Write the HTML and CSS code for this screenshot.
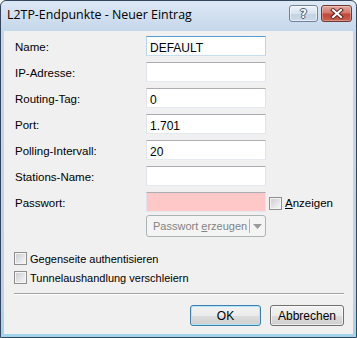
FILE: index.html
```html
<!doctype html>
<html lang="de">
  <head>
    <meta charset="UTF-8" />
    <title>L2TP-Endpunkte - Neuer Eintrag</title>
    <link rel="stylesheet" href="styles.css">
  </head>
  <body>
    <div class="window">
      <div class="titlebar">
        <span class="title">L2TP-Endpunkte - Neuer Eintrag</span>
        <div class="captionButtons">
          <div class="capBtn help"><span>?</span></div>
          <div class="capBtn close">
            <svg width="14" height="11" viewBox="0 0 14 11">
              <path d="M3 2 L11 9 M11 2 L3 9" stroke="#5a2a2a" stroke-width="4" stroke-linecap="square"/>
              <path d="M3 2 L11 9 M11 2 L3 9" stroke="#fff" stroke-width="2" stroke-linecap="square"/>
            </svg>
          </div>
        </div>
      </div>

      <div class="client">
        <div class="form">
          <label class="fieldLabel">Name:</label>
          <div class="textBox focused">DEFAULT</div>
          <span></span>

          <label class="fieldLabel">IP-Adresse:</label>
          <div class="textBox"></div>
          <span></span>

          <label class="fieldLabel">Routing-Tag:</label>
          <div class="textBox">0</div>
          <span></span>

          <label class="fieldLabel">Port:</label>
          <div class="textBox">1.701</div>
          <span></span>

          <label class="fieldLabel">Polling-Intervall:</label>
          <div class="textBox">20</div>
          <span></span>

          <label class="fieldLabel">Stations-Name:</label>
          <div class="textBox"></div>
          <span></span>

          <label class="fieldLabel">Passwort:</label>
          <div class="textBox invalid"></div>
          <div class="checkRow showPass">
            <span class="checkBox"></span>
            <span><u>A</u>nzeigen</span>
          </div>

          <span></span>
          <div class="splitButton">
            <span class="splitText">Passwort <u>e</u>rzeugen</span>
            <span class="splitArrow">
              <svg width="9" height="5" viewBox="0 0 9 5"><path d="M0 0 H9 L4.5 5 Z" fill="#9a9a9a"/></svg>
            </span>
          </div>
          <span></span>
        </div>

        <div class="options">
          <div class="checkRow">
            <span class="checkBox"></span>
            <span>Gegenseite authentisieren</span>
          </div>
          <div class="checkRow">
            <span class="checkBox"></span>
            <span>Tunnelaushandlung verschleiern</span>
          </div>
        </div>

        <div class="separator"></div>

        <div class="dialogButtons">
          <div class="pushButton default">OK</div>
          <div class="pushButton">Abbrechen</div>
        </div>
      </div>
    </div>
  </body>
</html>
```

FILE: styles.css
```css
* {
  box-sizing: border-box;
}

body {
  margin: 0;
  font-family: "Liberation Sans", Arial, sans-serif;
  font-size: 11px;
  color: #000;
  background: #fff;
}

.window {
  width: 357px;
  height: 338px;
  border: 1px solid #34465e;
  border-radius: 6px 6px 0 0;
  background: linear-gradient(#dde8f5, #c5d7eb 30px, #bdd2ea 300px, #9fd3ec);
  padding: 0 3px 3px;
  display: flex;
  flex-direction: column;
}

.titlebar {
  height: 30px;
  display: flex;
  align-items: flex-start;
}

.title {
  font-family: "Open Sans", "Noto Sans", sans-serif;
  font-size: 12.4px;
  margin: 5px 0 0 3px;
}

.captionButtons {
  margin-left: auto;
  margin-top: 4px;
  margin-right: 1px;
  display: flex;
  gap: 3px;
}

.capBtn {
  height: 17px;
  border-radius: 3px;
  display: flex;
  align-items: center;
  justify-content: center;
}

.help {
  width: 29px;
  border: 1px solid #71839c;
  background: linear-gradient(#eef3f9, #d7e2ef 50%, #c3d3e5 51%, #cbdaea);
  box-shadow: inset 0 0 0 1px rgba(255, 255, 255, 0.5);
}

.help span {
  font-family: "DejaVu Sans", sans-serif;
  font-weight: bold;
  font-size: 12px;
  color: #f4f7fb;
  text-shadow: 1px 0 #4d5e75, -1px 0 #4d5e75, 0 1px #4d5e75, 0 -1px #4d5e75;
}

.close {
  width: 31px;
  border: 1px solid #6e3a36;
  background: linear-gradient(#e4a89d, #d27a6c 45%, #c1473a 55%, #c9614f);
  box-shadow: inset 0 0 0 1px rgba(255, 255, 255, 0.3);
}

.client {
  flex: 1;
  background: #f0f0f0;
  padding: 5px 9px 0 10px;
  display: flex;
  flex-direction: column;
}

.form {
  display: grid;
  grid-template-columns: 132px 120px auto;
  grid-auto-rows: 20px;
  row-gap: 6px;
  align-items: center;
}

.fieldLabel {
  padding-left: 1px;
  padding-top: 2px;
  font-size: 11.5px;
}

.textBox {
  height: 20px;
  background: #fff;
  border: 1px solid;
  border-color: #abadb3 #e2e3ea #e3e9ef #e2e3ea;
  padding: 4px 0 0 3px;
  font-size: 12px;
}

.textBox.focused {
  border-color: #5a9bd5 #b7d4ef #c6def3 #b7d4ef;
}

.textBox.invalid {
  background: #ffc8c8;
}

.checkRow {
  display: flex;
  align-items: center;
  gap: 3px;
  height: 13px;
  white-space: nowrap;
}

.showPass {
  margin-left: 3px;
  padding-top: 2px;
  font-size: 11.5px;
}

.checkBox {
  width: 13px;
  height: 13px;
  border: 1px solid #8e8f8f;
  padding: 1px;
  background: linear-gradient(135deg, #cdcfd3, #f5f5f5) content-box, #f4f4f4;
  flex: none;
}

.splitButton {
  height: 22px;
  margin-top: -3px;
  align-self: start;
  border: 1px solid #adb2b5;
  border-radius: 3px;
  background: #f4f4f4;
  color: #838383;
  display: flex;
  align-items: center;
  font-size: 11px;
  white-space: nowrap;
}

.splitText {
  flex: 1;
  padding-left: 6px;
  border-right: 1px solid #adb2b5;
  height: 14px;
  line-height: 14px;
}

.splitArrow {
  width: 15px;
  display: flex;
  justify-content: center;
}

.options {
  margin-top: 14px;
  display: flex;
  flex-direction: column;
  gap: 6px;
}

.options .checkRow span:last-child {
  font-size: 11px;
  padding-top: 1px;
}

.separator {
  margin-top: 9px;
  height: 1px;
  background: #a0a0a0;
  border-bottom: 1px solid #fff;
  box-sizing: content-box;
}

.dialogButtons {
  margin-top: 10px;
  display: flex;
  justify-content: flex-end;
  gap: 9px;
}

.pushButton {
  width: 74px;
  height: 21px;
  border: 1px solid #707070;
  border-radius: 3px;
  background: linear-gradient(#f2f2f2, #ebebeb 50%, #dddddd 51%, #cfcfcf);
  box-shadow: inset 0 0 0 1px rgba(255, 255, 255, 0.6);
  display: flex;
  align-items: center;
  justify-content: center;
  font-size: 12px;
}

.pushButton.default {
  width: 71px;
  border-color: #3c7fb1;
  box-shadow: inset 0 0 0 1px #aee6fa;
}
```
